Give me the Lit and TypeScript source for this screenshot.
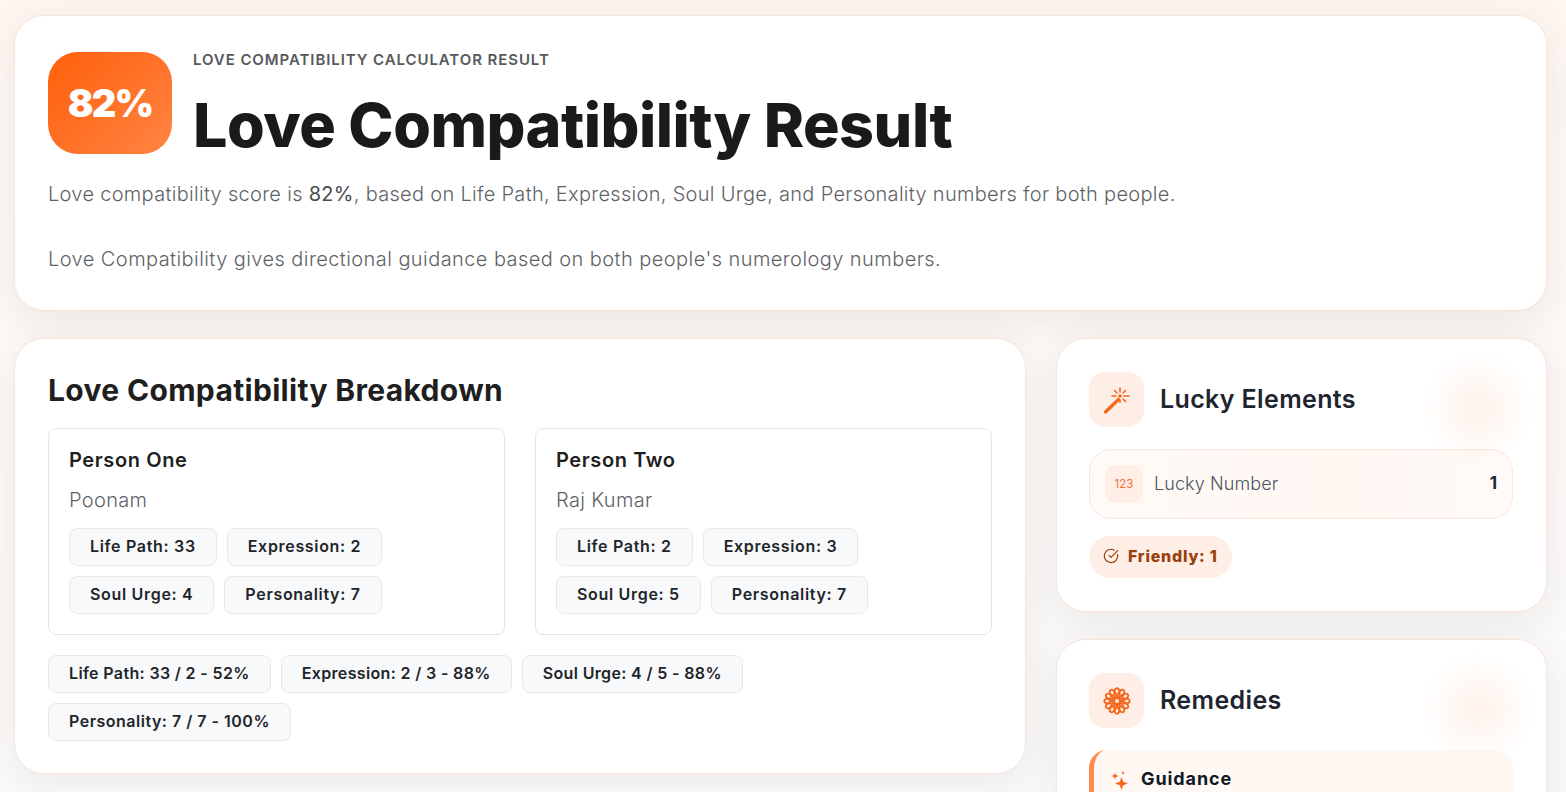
import { LitElement, html, css, svg } from "lit";
import { customElement } from "lit/decorators.js";

const person = (title: string, name: string, chips: string[][]) => html`
  <div class="person">
    <div class="person-title">${title}</div>
    <div class="person-name">${name}</div>
    ${chips.map((r) => html`<div class="chips">${r.map((c) => html`<span class="chip">${c}</span>`)}</div>`)}
  </div>`;

const petals = [0, 30, 60, 90, 120, 150, 180, 210, 240, 270, 300, 330];

@customElement("app-root")
export class AppRoot extends LitElement {
  static styles = css`
    :host {
      display: block;
      height: 792px;
      overflow: hidden;
      box-sizing: border-box;
      padding: 15px 0 0 14px;
      background: linear-gradient(180deg, #fff6f0 0, #fdf8f5 100px, #fbfbfb 792px);
      font-family: Inter, "Noto Sans", sans-serif;
      color: #1a1a1a;
    }
    .card {
      position: relative;
      box-sizing: border-box;
      background: #fff;
      border: 1px solid #f9e4d8;
      border-radius: 30px;
      box-shadow: 0 10px 40px rgba(60, 40, 20, 0.085);
      overflow: hidden;
    }
    .hero {
      width: 1533px;
      height: 296px;
      padding: 36px 33px 0;
    }
    .hero-head {
      display: flex;
      gap: 21px;
    }
    .score {
      width: 124px;
      height: 102px;
      flex: none;
      border-radius: 30px;
      background: linear-gradient(135deg, #ff5f0a, #ff8444);
      color: #fff;
      font-size: 38px;
      font-weight: 900;
      letter-spacing: -1.8px;
      display: flex;
      align-items: center;
      justify-content: center;
    }
    .eyebrow {
      font-size: 15px;
      line-height: 16px;
      font-weight: 600;
      letter-spacing: 0.92px;
      color: #55595e;
    }
    h1 {
      margin: 25px 0 0;
      font-size: 61px;
      line-height: 64px;
      font-weight: 800;
      letter-spacing: -0.48px;
      color: #1a1a1a;
    }
    .lead {
      margin: 23px 0 0;
      font-size: 20px;
      line-height: 28px;
      font-weight: 300;
      letter-spacing: 0.3px;
      color: #5f6368;
    }
    .lead b {
      font-weight: 400;
      color: #4a4d52;
    }
    .lead + .lead {
      margin-top: 37px;
      letter-spacing: 0.43px;
    }
    .grid {
      display: grid;
      grid-template-columns: 1012px 491px;
      column-gap: 30px;
      margin-top: 27px;
      align-items: start;
    }
    .breakdown {
      height: 436px;
      padding: 33px;
    }
    h2 {
      margin: 0;
      font-size: 30px;
      line-height: 36px;
      font-weight: 700;
      letter-spacing: 0.33px;
      color: #1f1f1f;
    }
    .people {
      display: grid;
      grid-template-columns: 457px 457px;
      column-gap: 30px;
      margin-top: 20px;
    }
    .person {
      box-sizing: border-box;
      height: 207px;
      padding: 19px 20px 0;
      border: 1px solid #e4e6e9;
      border-radius: 8px;
    }
    .person-title {
      font-size: 20px;
      line-height: 24px;
      font-weight: 600;
      letter-spacing: 0.6px;
      color: #1f1f1f;
    }
    .person-name {
      margin-top: 16px;
      font-size: 20px;
      line-height: 24px;
      font-weight: 300;
      letter-spacing: 0.33px;
      color: #5f6368;
      margin-bottom: 16px;
    }
    .chips {
      display: flex;
      flex-wrap: wrap;
      gap: 10px;
    }
    .chips + .chips {
      margin-top: 10px;
    }
    .chip {
      box-sizing: border-box;
      height: 38px;
      padding: 0 20px 2px;
      display: inline-flex;
      align-items: center;
      border: 1px solid #e6e8eb;
      border-radius: 8px;
      background: #f8f9fa;
      font-size: 16px;
      font-weight: 600;
      letter-spacing: 0.68px;
      color: #212529;
      white-space: nowrap;
    }
    .summary {
      margin-top: 20px;
    }
    .summary .chip {
      letter-spacing: 0.35px;
    }
    .summary + .chips .chip {
      letter-spacing: 0.5px;
    }
    .side {
      display: flex;
      flex-direction: column;
      gap: 27px;
    }
    .side .card {
      padding: 33px 33px 32px 32px;
    }
    .lucky {
      height: 274px;
    }
    .remedies {
      height: 400px;
    }
    .blob {
      position: absolute;
      top: 13px;
      right: 12px;
      width: 112px;
      height: 112px;
      border-radius: 50%;
      background: radial-gradient(circle, rgba(255, 130, 60, 0.1) 0, rgba(255, 130, 60, 0.05) 38%, rgba(255, 130, 60, 0.015) 60%, rgba(255, 130, 60, 0) 72%);
    }
    .side-head {
      display: flex;
      align-items: center;
      gap: 16px;
    }
    .tile {
      width: 55px;
      height: 55px;
      flex: none;
      border-radius: 16px;
      background: #ffeee5;
      display: flex;
      align-items: center;
      justify-content: center;
    }
    h3 {
      margin: 0;
      padding-bottom: 2px;
      font-size: 25px;
      line-height: 32px;
      font-weight: 600;
      letter-spacing: 0.37px;
      color: #1e2530;
    }
    .row {
      box-sizing: border-box;
      height: 70px;
      margin-top: 22px;
      padding: 0 15px;
      display: flex;
      align-items: center;
      gap: 11px;
      border: 1px solid #fbe6da;
      border-radius: 22px;
      background: linear-gradient(90deg, #fffaf7, #fff7f2 60%, #fffaf7);
    }
    .num {
      width: 38px;
      height: 38px;
      border-radius: 11px;
      background: #ffeee5;
      color: #f0703a;
      font-size: 11.5px;
      display: flex;
      align-items: center;
      justify-content: center;
    }
    .row-label {
      flex: 1;
      padding-bottom: 2px;
      font-size: 18px;
      font-weight: 300;
      letter-spacing: 0.1px;
      color: #4b5563;
    }
    .row-value {
      padding-bottom: 2px;
      font-size: 17px;
      font-weight: 700;
      color: #1e2530;
    }
    .pill {
      margin-top: 17px;
      box-sizing: border-box;
      height: 42px;
      width: 143px;
      padding: 0 0 2px 14px;
      display: flex;
      align-items: center;
      gap: 9px;
      border-radius: 21px;
      background: #ffeee5;
      color: #9a3f0c;
      font-size: 16px;
      font-weight: 800;
      letter-spacing: 0.75px;
      white-space: nowrap;
    }
    .pill svg {
      flex: none;
    }
    .guide {
      margin-top: 22px;
      height: 200px;
      box-sizing: border-box;
      border-left: 5px solid #ff8a4c;
      border-radius: 18px;
      background: #fff8f3;
      padding: 17px 16px 0 17px;
      display: flex;
      align-items: flex-start;
      gap: 12px;
      font-size: 18px;
      line-height: 24px;
      font-weight: 700;
      letter-spacing: 0.9px;
      color: #111827;
    }
    .guide svg {
      margin-top: 3px;
    }
  `;

  render() {
    return html`
      <section class="card hero">
        <div class="hero-head">
          <div class="score">82%</div>
          <div>
            <div class="eyebrow">LOVE COMPATIBILITY CALCULATOR RESULT</div>
            <h1>Love Compatibility Result</h1>
          </div>
        </div>
        <p class="lead">Love compatibility score is <b>82%</b>, based on Life Path, Expression, Soul Urge, and Personality numbers for both people.</p>
        <p class="lead">Love Compatibility gives directional guidance based on both people's numerology numbers.</p>
      </section>

      <div class="grid">
        <section class="card breakdown">
          <h2>Love Compatibility Breakdown</h2>
          <div class="people">
            ${person("Person One", "Poonam", [["Life Path: 33", "Expression: 2"], ["Soul Urge: 4", "Personality: 7"]])}
            ${person("Person Two", "Raj Kumar", [["Life Path: 2", "Expression: 3"], ["Soul Urge: 5", "Personality: 7"]])}
          </div>
          <div class="chips summary">
            <span class="chip">Life Path: 33 / 2 - 52%</span>
            <span class="chip">Expression: 2 / 3 - 88%</span>
            <span class="chip">Soul Urge: 4 / 5 - 88%</span>
          </div>
          <div class="chips">
            <span class="chip">Personality: 7 / 7 - 100%</span>
          </div>
        </section>

        <div class="side">
          <section class="card lucky">
            <div class="blob"></div>
            <div class="side-head">
              <div class="tile">
                <svg width="28" height="28" viewBox="0 0 28 28" fill="none" stroke="#f4661b" stroke-linecap="round">
                  <path d="M2.5 26 L15.5 13.5" stroke-width="3.2" />
                  <circle cx="17" cy="10" r="1.8" fill="#f4661b" stroke="none" />
                  <path d="M17 2V6M17 14V16.5M9 10H13M21 10H26M11.5 4.5L14 7M22.5 4.5L20 7M20 13L22.5 15.5" stroke-width="1.6" />
                </svg>
              </div>
              <h3>Lucky Elements</h3>
            </div>
            <div class="row">
              <div class="num">123</div>
              <div class="row-label">Lucky Number</div>
              <div class="row-value">1</div>
            </div>
            <div class="pill">
              <svg width="16" height="16" viewBox="0 0 24 24" fill="none" stroke="#9a3f0c" stroke-width="1.8" stroke-linecap="round" stroke-linejoin="round">
                <path d="M21.8 10A10 10 0 1 1 17 3.3" />
                <path d="M9 11l3 3L22 4" />
              </svg>
              Friendly: 1
            </div>
          </section>

          <section class="card remedies">
            <div class="blob"></div>
            <div class="side-head">
              <div class="tile">
                <svg width="28" height="28" viewBox="0 0 30 30" fill="none" stroke="#f4661b" stroke-width="2">
                  ${petals.map((a) => svg`<ellipse cx="15" cy="7.2" rx="2.8" ry="5.8" transform="rotate(${a} 15 15)" />`)}
                  <circle cx="15" cy="15" r="3.2" fill="#ffeee5" />
                </svg>
              </div>
              <h3>Remedies</h3>
            </div>
            <div class="guide">
              <svg width="18" height="20" viewBox="0 0 18 20" fill="#f4661b">
                <path d="M10.5 7 L12.2 11.8 L17 13.5 L12.2 15.2 L10.5 20 L8.8 15.2 L4 13.5 L8.8 11.8 Z" />
                <path d="M4 2.5 L4.9 5.1 L7.5 6 L4.9 6.9 L4 9.5 L3.1 6.9 L0.5 6 L3.1 5.1 Z" />
                <path d="M12 1 L12.6 2.4 L14 3 L12.6 3.6 L12 5 L11.4 3.6 L10 3 L11.4 2.4 Z" />
              </svg>
              Guidance
            </div>
          </section>
        </div>
      </div>
    `;
  }
}
